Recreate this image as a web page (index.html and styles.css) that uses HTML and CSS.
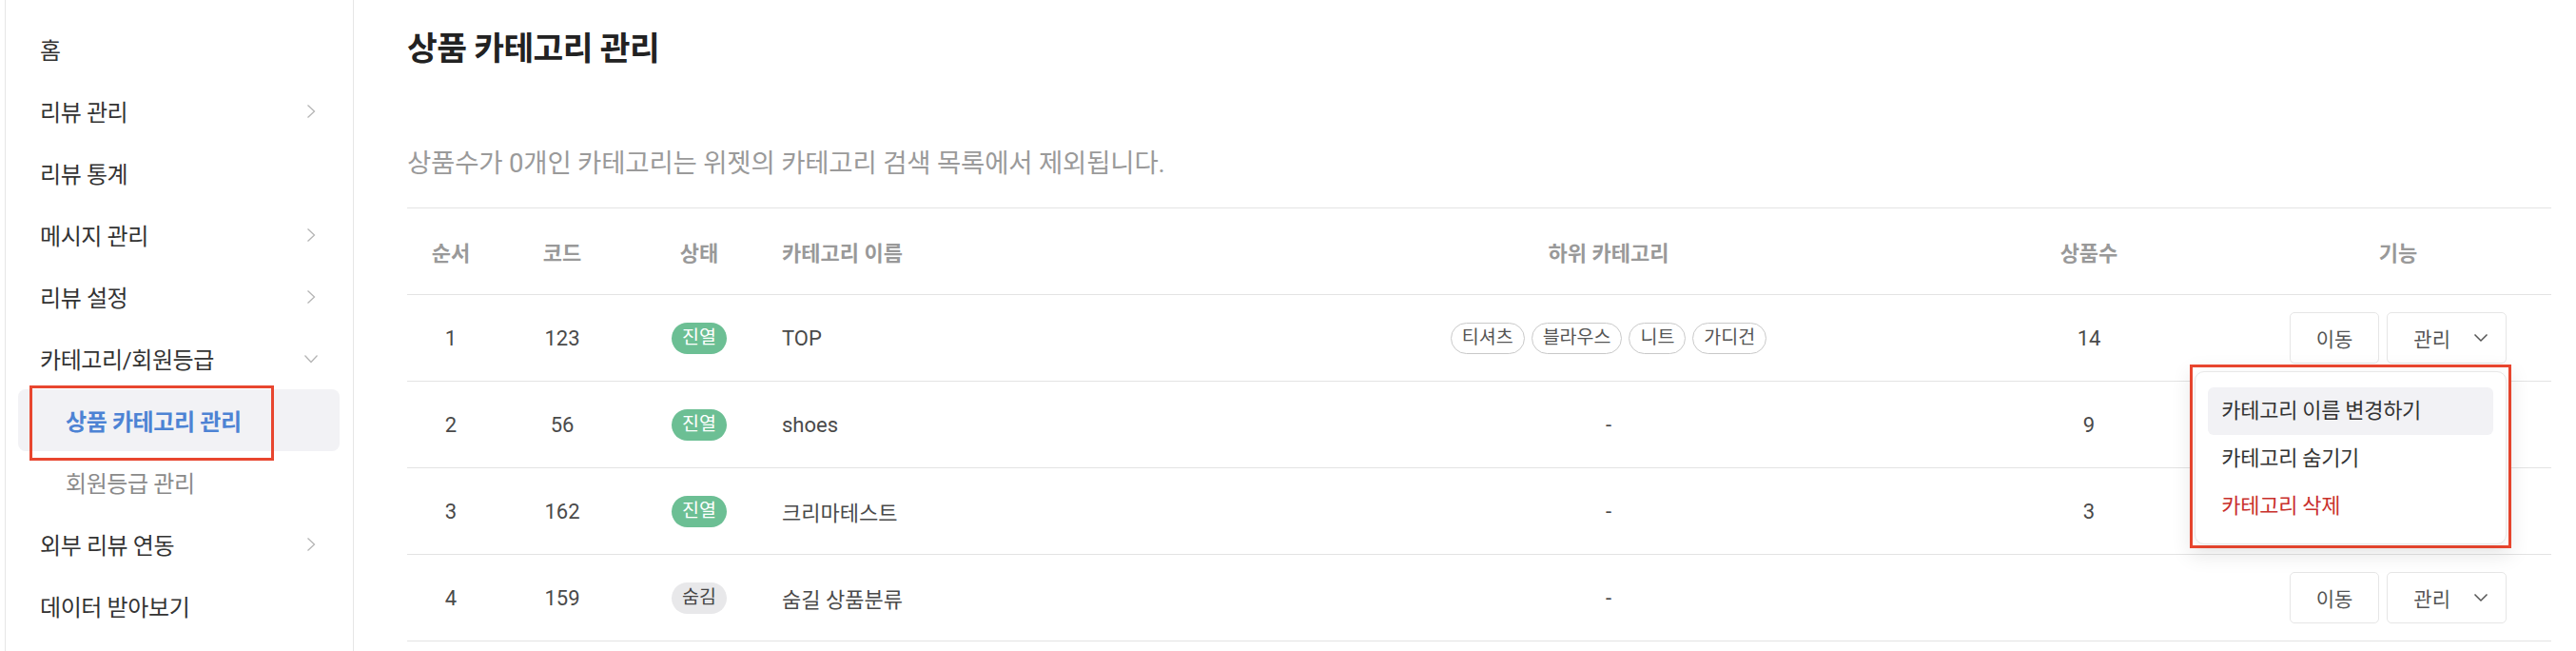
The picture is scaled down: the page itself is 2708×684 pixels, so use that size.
FILE: index.html
```html
<!DOCTYPE html>
<html lang="ko">
<head>
<meta charset="utf-8">
<title>상품 카테고리 관리</title>
<link rel="stylesheet" href="styles.css">
</head>
<body>
<div class="app">
  <aside class="sidebar">
    <nav class="menu">
      <div class="menu-item"><span>홈</span></div>
      <div class="menu-item"><span>리뷰 관리</span><svg class="chev-r" viewBox="0 0 10 16"><polyline points="1.5,1.5 8.5,8 1.5,14.5"/></svg></div>
      <div class="menu-item"><span>리뷰 통계</span></div>
      <div class="menu-item"><span>메시지 관리</span><svg class="chev-r" viewBox="0 0 10 16"><polyline points="1.5,1.5 8.5,8 1.5,14.5"/></svg></div>
      <div class="menu-item"><span>리뷰 설정</span><svg class="chev-r" viewBox="0 0 10 16"><polyline points="1.5,1.5 8.5,8 1.5,14.5"/></svg></div>
      <div class="menu-item"><span>카테고리/회원등급</span><svg class="chev-d" viewBox="0 0 16 10"><polyline points="1.5,1.5 8,8.5 14.5,1.5"/></svg></div>
      <div class="sub-item active"><span>상품 카테고리 관리</span><div class="annot-side"></div></div>
      <div class="sub-item"><span>회원등급 관리</span></div>
      <div class="menu-item"><span>외부 리뷰 연동</span><svg class="chev-r" viewBox="0 0 10 16"><polyline points="1.5,1.5 8.5,8 1.5,14.5"/></svg></div>
      <div class="menu-item"><span>데이터 받아보기</span></div>
    </nav>
  </aside>

  <main class="main">
    <h1 class="title">상품 카테고리 관리</h1>
    <p class="desc">상품수가 0개인 카테고리는 위젯의 카테고리 검색 목록에서 제외됩니다.</p>

    <div class="table">
      <div class="row head">
        <div class="cell">순서</div>
        <div class="cell">코드</div>
        <div class="cell">상태</div>
        <div class="cell left">카테고리 이름</div>
        <div class="cell">하위 카테고리</div>
        <div class="cell">상품수</div>
        <div class="cell">기능</div>
      </div>

      <div class="row">
        <div class="cell">1</div>
        <div class="cell">123</div>
        <div class="cell"><span class="badge on">진열</span></div>
        <div class="cell left">TOP</div>
        <div class="cell chips"><span class="chip">티셔츠</span><span class="chip">블라우스</span><span class="chip">니트</span><span class="chip">가디건</span></div>
        <div class="cell">14</div>
        <div class="cell actions">
          <button class="btn">이동</button>
          <div class="btn-wrap">
            <button class="btn manage">관리<svg class="chev-btn" viewBox="0 0 16 10"><polyline points="1.5,1.5 8,8 14.5,1.5"/></svg></button>
            <div class="dropdown-annot">
              <div class="dropdown">
                <div class="dd-item hover">카테고리 이름 변경하기</div>
                <div class="dd-item">카테고리 숨기기</div>
                <div class="dd-item danger">카테고리 삭제</div>
              </div>
            </div>
          </div>
        </div>
      </div>

      <div class="row">
        <div class="cell">2</div>
        <div class="cell">56</div>
        <div class="cell"><span class="badge on">진열</span></div>
        <div class="cell left">shoes</div>
        <div class="cell">-</div>
        <div class="cell">9</div>
        <div class="cell actions"></div>
      </div>

      <div class="row">
        <div class="cell">3</div>
        <div class="cell">162</div>
        <div class="cell"><span class="badge on">진열</span></div>
        <div class="cell left">크리마테스트</div>
        <div class="cell">-</div>
        <div class="cell">3</div>
        <div class="cell actions"></div>
      </div>

      <div class="row">
        <div class="cell">4</div>
        <div class="cell">159</div>
        <div class="cell"><span class="badge off">숨김</span></div>
        <div class="cell left">숨길 상품분류</div>
        <div class="cell">-</div>
        <div class="cell"></div>
        <div class="cell actions">
          <button class="btn">이동</button>
          <button class="btn manage">관리<svg class="chev-btn" viewBox="0 0 16 10"><polyline points="1.5,1.5 8,8 14.5,1.5"/></svg></button>
        </div>
      </div>
    </div>
  </main>
</div>
</body>
</html>
```

FILE: styles.css
```css
* { box-sizing: border-box; }

html, body {
  margin: 0;
  padding: 0;
  background: #ffffff;
}

body {
  font-family: Roboto, "Noto Sans CJK KR", sans-serif;
  color: #333333;
  width: 2708px;
  height: 684px;
  overflow: hidden;
}

.app {
  display: flex;
  height: 684px;
}

/* ---------- Sidebar ---------- */
.sidebar {
  width: 367px;
  margin-left: 5px;
  height: 684px;
  border-left: 1px solid #e6e6e6;
  border-right: 1px solid #e6e6e6;
  flex-shrink: 0;
}

.menu {
  padding-top: 19px;
  display: flex;
  flex-direction: column;
}

.menu-item {
  height: 65px;
  display: flex;
  align-items: center;
  justify-content: space-between;
  padding: 0 39px 0 36px;
  font-size: 24px;
  color: #333333;
  letter-spacing: -0.4px;
}

.chev-r {
  width: 10px;
  height: 16px;
  fill: none;
  stroke: #b5b5b5;
  stroke-width: 1.3;
}

.chev-d {
  width: 16px;
  height: 10px;
  fill: none;
  stroke: #b5b5b5;
  stroke-width: 1.3;
  margin-right: -3px;
}

.sub-item {
  height: 65px;
  display: flex;
  align-items: center;
  padding-left: 63px;
  font-size: 24px;
  color: #8a8a8a;
  letter-spacing: -0.4px;
}

.sub-item.active {
  position: relative;
  margin: 0 14px 0 13px;
  padding-left: 50px;
  background: #f2f2f5;
  border-radius: 8px;
  color: #4d83d4;
  font-weight: 700;
}

.annot-side {
  position: absolute;
  left: 12px;
  top: -4px;
  width: 257px;
  height: 79px;
  border: 3px solid #e8462f;
}

/* ---------- Main ---------- */
.main {
  flex: 1;
  padding: 0 26px 0 56px;
}

.title {
  margin: 28px 0 0 0;
  height: 46px;
  line-height: 46px;
  font-size: 34.5px;
  font-weight: 700;
  color: #222222;
  letter-spacing: -0.6px;
}

.desc {
  margin: 80px 0 0 0;
  height: 36px;
  line-height: 36px;
  font-size: 27.5px;
  color: #9a9a9a;
  letter-spacing: -0.2px;
}

.table {
  margin-top: 28px;
  border-top: 1px solid #e3e3e3;
}

.row {
  display: grid;
  grid-template-columns: 92px 142px 146px 542px 682px 328px 322px;
  height: 91px;
  border-bottom: 1px solid #e3e3e3;
  align-items: center;
  font-size: 22px;
  color: #4a4a4a;
}

.row.head {
  font-size: 22px;
  font-weight: 700;
  color: #999999;
}

.cell {
  text-align: center;
}

.cell.left {
  text-align: left;
  padding-left: 14px;
}

.badge {
  display: inline-flex;
  align-items: center;
  justify-content: center;
  height: 33px;
  padding: 0 11px;
  border-radius: 17px;
  font-size: 19.5px;
  line-height: 1;
}

.badge.on {
  background: #6cbf94;
  color: #ffffff;
}

.badge.off {
  background: #e8e8ea;
  color: #444444;
}

.chips {
  display: flex;
  justify-content: center;
  gap: 7px;
}

.chip {
  display: inline-flex;
  align-items: center;
  height: 33px;
  padding: 0 11px;
  border: 1px solid #c9c9c9;
  border-radius: 17px;
  font-size: 19.5px;
  color: #555555;
  line-height: 1;
}

.actions {
  display: flex;
  justify-content: center;
  gap: 8px;
}

.btn-wrap {
  position: relative;
}

.btn {
  height: 54px;
  padding: 0 27px;
  background: #ffffff;
  border: 1px solid #e6e6e6;
  border-radius: 5px;
  font-family: Roboto, "Noto Sans CJK KR", sans-serif;
  font-size: 21px;
  color: #555555;
  display: inline-flex;
  align-items: center;
}

.btn.manage {
  width: 126px;
  padding: 0 18px 0 27px;
  justify-content: space-between;
}

.chev-btn {
  width: 16px;
  height: 10px;
  fill: none;
  stroke: #555555;
  stroke-width: 1.5;
}

.dropdown-annot {
  position: absolute;
  right: -5px;
  top: 55px;
  width: 338px;
  height: 193px;
  border: 3px solid #e8462f;
  padding: 4px 2px 1px 2px;
  background: #ffffff;
  box-shadow: 0 8px 20px rgba(0, 0, 0, 0.09);
  z-index: 10;
}

.dropdown {
  height: 182px;
  border: 1px solid #e8e8e8;
  border-radius: 10px;
  padding: 16px 13px 14px 13px;
  background: #ffffff;
  box-shadow: 0 2px 8px rgba(0, 0, 0, 0.06);
}

.dd-item {
  height: 50px;
  line-height: 50px;
  padding-left: 14px;
  font-size: 22px;
  color: #333333;
  border-radius: 6px;
  text-align: left;
  letter-spacing: -0.3px;
}

.dd-item.hover {
  background: #f2f2f5;
}

.dd-item.danger {
  color: #c9302c;
}
```
